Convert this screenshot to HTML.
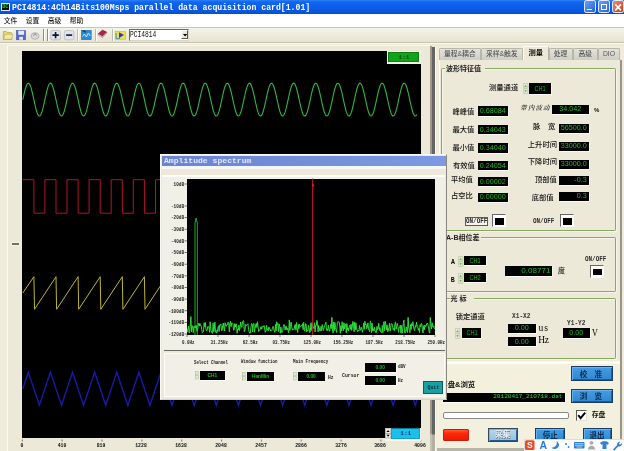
<!DOCTYPE html>
<html><head><meta charset="utf-8"><title>PCI4814</title>
<style>
html,body{margin:0;padding:0;}
body{width:624px;height:451px;overflow:hidden;background:#ece9d8;position:relative;font-family:"Liberation Sans","Noto Sans CJK SC",sans-serif;font-size:7px;color:#000;}
.a{position:absolute;box-sizing:border-box;}
.t{position:absolute;white-space:nowrap;line-height:1;}
.cj{font-family:"Liberation Sans","Noto Sans CJK SC",sans-serif;font-size:7.3px;color:#111;font-weight:500;}
.mono{font-family:"Liberation Mono","Noto Sans CJK SC",monospace;}
.ser{font-family:"Liberation Serif","Noto Serif CJK SC",serif;}
.vb{position:absolute;box-sizing:border-box;background:#000;color:#1ebc26;font-family:"Liberation Sans",sans-serif;font-size:7.2px;line-height:1;text-align:right;white-space:nowrap;overflow:hidden;box-shadow:0.7px 0.9px 0 0 #fdfdf8;}
.vb span{position:absolute;right:2px;top:50%;transform:translateY(-50%);}
.vb.c span{right:auto;left:50%;transform:translate(-50%,-50%);}
.vb.n span{right:auto;left:50%;transform:translate(-50%,-50%) scaleX(0.78);}
.gb{position:absolute;box-sizing:border-box;border:1.1px solid #86aa62;border-top-width:1.5px;border-bottom-width:1.7px;border-radius:1.2px;box-shadow:inset 0.8px 0.8px 0 #faf9f0,0.8px 0.8px 0 #faf9f0;}
.btn{position:absolute;box-sizing:border-box;border:0.9px solid #1a3c62;background:linear-gradient(#449ee4,#2e86d0);box-shadow:inset 0.9px 0.9px 0 #68b4f2,inset -0.9px -0.9px 0 #1e5c98;color:#0c2c4c;text-align:center;font-size:7.5px;line-height:1;}
.tab{position:absolute;box-sizing:border-box;top:48px;height:11.5px;border:1px solid #b8b6a8;border-bottom:none;border-radius:1.5px 1.5px 0 0;background:linear-gradient(#e4e3da,#cfcec6);color:#444;font-size:7px;text-align:center;line-height:10px;}
</style></head><body><div id="root" style="position:absolute;left:0;top:0;width:624px;height:451px;overflow:hidden;will-change:transform;">

<div class="a" style="left:0;top:0;width:624px;height:14.4px;background:linear-gradient(#3080f6 0%,#1066ee 14%,#0c5ee8 50%,#0a56dc 85%,#0a4cc8 100%);"></div>
<div class="a" style="left:0.5px;top:3px;width:9.8px;height:7.8px;background:#0c100c;border:0.8px solid #e8e8e8;"></div>
<div class="t mono" style="left:2.2px;top:4.6px;font-size:5px;color:#30c040;font-weight:bold;">DC</div>
<div class="t mono" style="left:12.3px;top:3.7px;font-size:9px;font-weight:bold;color:#fff;transform-origin:0 50%;transform:scaleX(0.905);">PCI4814:4Ch14Bits100Msps parallel data acquisition card[1.01]</div>
<div class="a" style="left:584.3px;top:0.4px;width:12.2px;height:13.1px;border:0.9px solid #e4ecfc;border-radius:2.2px;background:linear-gradient(135deg,#6aa0f6,#2462dc);"></div>
<div class="a" style="left:598.1px;top:0.4px;width:12.2px;height:13.1px;border:0.9px solid #e4ecfc;border-radius:2.2px;background:linear-gradient(135deg,#6aa0f6,#2462dc);"></div>
<div class="a" style="left:612.0px;top:0.4px;width:12.2px;height:13.1px;border:0.9px solid #e4ecfc;border-radius:2.2px;background:linear-gradient(135deg,#f08c70,#c43c1c);"></div>
<div class="a" style="left:587.3px;top:8.6px;width:4.6px;height:1.7px;background:#fff;"></div>
<div class="a" style="left:601.3px;top:3.6px;width:6.2px;height:6.2px;border:1px solid #fff;border-top-width:1.9px;"></div>
<svg class="a" style="left:612.2px;top:0.6px" width="12" height="13"><path d="M3.2 3.4L9 9.4M9 3.4L3.2 9.4" stroke="#fff" stroke-width="1.6"/></svg>
<div class="a" style="left:0;top:14.4px;width:624px;height:12.8px;background:#fff;"></div>
<div class="a" style="left:0;top:26.9px;width:624px;height:0.8px;background:#c8c5b4;"></div>
<div class="t cj" style="left:3.8px;top:18px;font-size:6.8px;color:#1a1a1a;">文件</div>
<div class="t cj" style="left:25.8px;top:18px;font-size:6.8px;color:#1a1a1a;">设置</div>
<div class="t cj" style="left:47.8px;top:18px;font-size:6.8px;color:#1a1a1a;">高级</div>
<div class="t cj" style="left:69.8px;top:18px;font-size:6.8px;color:#1a1a1a;">帮助</div>
<div class="a" style="left:0;top:27.7px;width:624px;height:14.8px;background:linear-gradient(#f4f3ea,#ece9d8 60%,#e6e3d2);"></div>
<div class="a" style="left:0;top:42.3px;width:624px;height:0.8px;background:#c5c2b0;"></div>
<div class="a" style="left:0;top:43.1px;width:624px;height:1.2px;background:#fbfaf4;"></div>
<div class="a" style="left:43.3px;top:29px;width:0.8px;height:12px;background:#8e8c7e;"></div>
<div class="a" style="left:44.1px;top:29px;width:0.8px;height:12px;background:#fff;"></div>
<div class="a" style="left:47.1px;top:29px;width:0.8px;height:12px;background:#8e8c7e;"></div>
<div class="a" style="left:47.9px;top:29px;width:0.8px;height:12px;background:#fff;"></div>
<div class="a" style="left:77.3px;top:29px;width:0.8px;height:12px;background:#bdbbaa;"></div>
<div class="a" style="left:78.1px;top:29px;width:0.8px;height:12px;background:#fff;"></div>
<div class="a" style="left:95.0px;top:29px;width:0.8px;height:12px;background:#bdbbaa;"></div>
<div class="a" style="left:95.8px;top:29px;width:0.8px;height:12px;background:#fff;"></div>
<div class="a" style="left:112.3px;top:29px;width:0.8px;height:12px;background:#bdbbaa;"></div>
<div class="a" style="left:113.1px;top:29px;width:0.8px;height:12px;background:#fff;"></div>
<svg class="a" style="left:0;top:27px" width="200" height="16" viewBox="0 27 200 16">
<!-- open folder -->
<path d="M3.3 31.5h3l1 1h4.5v7H3.3z" fill="#e4d878" stroke="#a89c48" stroke-width="0.6"/><path d="M9 30.5h3.2v2.5" fill="none" stroke="#fff" stroke-width="0.9"/>
<path d="M3.6 39.3l1.5-5h7.7l-1.3 5z" fill="#f4ea9c" stroke="#a89c48" stroke-width="0.5"/>
<!-- save -->
<rect x="16.4" y="30.5" width="9.2" height="9.3" fill="#5468c8" stroke="#3c4ca4" stroke-width="0.5"/>
<rect x="18.3" y="30.8" width="5.8" height="4" fill="#e8ecff"/>
<rect x="19.2" y="36.8" width="3.8" height="3" fill="#e4e8fa"/>
<!-- gray icon -->
<ellipse cx="35" cy="36" rx="4" ry="3.3" fill="#d8d8dc" stroke="#9898a0" stroke-width="0.6"/>
<path d="M33.5 35.5l1.5-2 1.5 2" fill="none" stroke="#707078" stroke-width="0.8"/>
<!-- plus -->
<rect x="50.8" y="30.5" width="9.6" height="9.3" rx="1.6" fill="#e0e4ee" stroke="#a4acbc" stroke-width="0.6"/>
<path d="M52.4 35.1h6.4M55.6 32v6.2" stroke="#101420" stroke-width="1.6"/>
<!-- minus -->
<rect x="64.4" y="30.5" width="9.6" height="9.3" rx="1.6" fill="#e0e4ee" stroke="#a4acbc" stroke-width="0.6"/>
<path d="M66.2 35.1h6" stroke="#101420" stroke-width="1.6"/>
<!-- blue chart -->
<rect x="81.4" y="30.3" width="9.8" height="9.4" fill="#2c8ad2" stroke="#1c5c9c" stroke-width="0.5"/><path d="M81.6 30.5h4v2.5z" fill="#143c78"/>
<path d="M82.4 36.5l2-2.5 2 3 2-4 2 3" fill="none" stroke="#d0f0ff" stroke-width="0.9"/>
<!-- book -->
<g transform="translate(14.5,3.6) scale(0.85)"><path d="M98.5 35.5l5-4.5 5 2.5-5 5z" fill="#a82448" stroke="#701428" stroke-width="0.5"/>
<path d="M98.5 35.5l5 3 5-5v1.3l-5 5-5-3z" fill="#e8d8d8" stroke="#701428" stroke-width="0.4"/></g>
<!-- play -->
<rect x="115.3" y="31.4" width="10.4" height="7.8" fill="#f2e048" stroke="#c0a830" stroke-width="0.5"/>
<path d="M119 32.3v5.6l5-2.8z" fill="#2838c0"/>
<path d="M116.2 33v5.5h4" fill="none" stroke="#3080d0" stroke-width="0.8"/>
</svg>
<div class="a" style="left:129px;top:29px;width:60px;height:11.5px;background:#fff;border:1px solid #6a6a60;border-right-color:#d8d6c8;border-bottom-color:#d8d6c8;"></div>
<div class="t mono" style="left:130.3px;top:30.9px;font-size:8.8px;color:#111;transform-origin:0 50%;transform:scaleX(0.71);">PCI4814</div>
<div class="a" style="left:180.5px;top:30.2px;width:7.5px;height:9.3px;background:#ece9d8;border:0.6px solid #fff;border-right-color:#555;border-bottom-color:#555;"></div>
<svg class="a" style="left:180.5px;top:30px" width="8" height="10"><path d="M2 4h4.2l-2.1 2.4z" fill="#000"/></svg>
<div class="a" style="left:0;top:44.3px;width:7px;height:407px;background:#efecdc;"></div>
<div class="a" style="left:7px;top:45px;width:1px;height:406px;background:#fbfaf2;"></div>
<div class="a" style="left:8px;top:45px;width:422px;height:1px;background:#fbfaf2;"></div>
<div class="a" style="left:12.2px;top:243.2px;width:7.3px;height:1.6px;background:#76715a;box-shadow:0 0 1.2px 0.6px #fbfaf4;"></div>
<div class="a" style="left:22.0px;top:51.0px;width:398.5px;height:386.5px;background:#000;"></div>
<svg class="a" style="left:0;top:0" width="624" height="451">
<polyline points="22.8,99.6 23.3,97.3 23.8,95.0 24.3,92.8 24.8,90.8 25.3,88.9 25.8,87.3 26.3,85.8 26.8,84.7 27.3,83.9 27.8,83.4 28.3,83.2 28.8,83.3 29.3,83.8 29.8,84.6 30.3,85.7 30.8,87.1 31.3,88.7 31.8,90.6 32.3,92.6 32.8,94.8 33.3,97.0 33.8,99.3 34.3,101.7 34.8,104.0 35.3,106.1 35.8,108.2 36.3,110.1 36.8,111.8 37.3,113.2 37.8,114.4 38.3,115.2 38.8,115.8 39.3,116.0 39.8,115.9 40.3,115.4 40.8,114.7 41.3,113.6 41.8,112.3 42.3,110.7 42.8,108.9 43.3,106.8 43.8,104.7 44.3,102.4 44.8,100.1 45.3,97.8 45.8,95.5 46.3,93.3 46.8,91.2 47.3,89.3 47.8,87.6 48.3,86.1 48.8,84.9 49.3,84.0 49.8,83.5 50.3,83.2 50.8,83.3 51.3,83.7 51.8,84.4 52.3,85.4 52.8,86.8 53.3,88.3 53.8,90.1 54.3,92.1 54.8,94.3 55.3,96.5 55.8,98.8 56.3,101.2 56.8,103.5 57.3,105.7 57.8,107.8 58.3,109.7 58.8,111.4 59.3,112.9 59.8,114.1 60.3,115.1 60.8,115.7 61.3,116.0 61.8,115.9 62.3,115.6 62.8,114.9 63.3,113.9 63.8,112.6 64.3,111.1 64.8,109.3 65.3,107.3 65.8,105.2 66.3,102.9 66.8,100.6 67.3,98.3 67.8,96.0 68.3,93.8 68.8,91.7 69.3,89.7 69.8,88.0 70.3,86.4 70.8,85.2 71.3,84.2 71.8,83.6 72.3,83.2 72.8,83.2 73.3,83.6 73.8,84.2 74.3,85.2 74.8,86.4 75.3,88.0 75.8,89.7 76.3,91.7 76.8,93.8 77.3,96.0 77.8,98.3 78.3,100.6 78.8,103.0 79.3,105.2 79.8,107.3 80.3,109.3 80.8,111.1 81.3,112.6 81.8,113.9 82.3,114.9 82.8,115.6 83.3,115.9 83.8,116.0 84.3,115.7 84.8,115.1 85.3,114.1 85.8,112.9 86.3,111.4 86.8,109.7 87.3,107.7 87.8,105.7 88.3,103.4 88.8,101.1 89.3,98.8 89.8,96.5 90.3,94.2 90.8,92.1 91.3,90.1 91.8,88.3 92.3,86.7 92.8,85.4 93.3,84.4 93.8,83.7 94.3,83.3 94.8,83.2 95.3,83.5 95.8,84.1 96.3,85.0 96.8,86.1 97.3,87.6 97.8,89.3 98.3,91.2 98.8,93.3 99.3,95.5 99.8,97.8 100.3,100.1 100.8,102.5 101.3,104.7 101.8,106.9 102.3,108.9 102.8,110.7 103.3,112.3 103.8,113.6 104.3,114.7 104.8,115.5 105.3,115.9 105.8,116.0 106.3,115.8 106.8,115.2 107.3,114.4 107.8,113.2 108.3,111.8 108.8,110.1 109.3,108.2 109.8,106.1 110.3,103.9 110.8,101.6 111.3,99.3 111.8,97.0 112.3,94.7 112.8,92.6 113.3,90.5 113.8,88.7 114.3,87.1 114.8,85.7 115.3,84.6 115.8,83.8 116.3,83.3 116.8,83.2 117.3,83.4 117.8,83.9 118.3,84.7 118.8,85.9 119.3,87.3 119.8,88.9 120.3,90.8 120.8,92.8 121.3,95.0 121.8,97.3 122.3,99.6 122.8,101.9 123.3,104.2 123.8,106.4 124.3,108.4 124.8,110.3 125.3,112.0 125.8,113.4 126.3,114.5 126.8,115.3 127.3,115.8 127.8,116.0 128.3,115.8 128.8,115.4 129.3,114.6 129.8,113.5 130.3,112.1 130.8,110.5 131.3,108.6 131.8,106.6 132.3,104.4 132.8,102.2 133.3,99.8 133.8,97.5 134.3,95.2 134.8,93.0 135.3,91.0 135.8,89.1 136.3,87.4 136.8,86.0 137.3,84.8 137.8,84.0 138.3,83.4 138.8,83.2 139.3,83.3 139.8,83.8 140.3,84.5 140.8,85.6 141.3,86.9 141.8,88.5 142.3,90.4 142.8,92.4 143.3,94.5 143.8,96.8 144.3,99.1 144.8,101.4 145.3,103.7 145.8,105.9 146.3,108.0 146.8,109.9 147.3,111.6 147.8,113.1 148.3,114.3 148.8,115.2 149.3,115.7 149.8,116.0 150.3,115.9 150.8,115.5 151.3,114.8 151.8,113.7 152.3,112.4 152.8,110.8 153.3,109.0 153.8,107.1 154.3,104.9 154.8,102.7 155.3,100.3 155.8,98.0 156.3,95.7 156.8,93.5 157.3,91.4 157.8,89.5 158.3,87.8 158.8,86.3 159.3,85.0 159.8,84.1 160.3,83.5 160.8,83.2 161.3,83.3 161.8,83.6 162.3,84.3 162.8,85.3 163.3,86.6 163.8,88.2 164.3,89.9 164.8,91.9 165.3,94.0 165.8,96.3 166.3,98.6 166.8,100.9 167.3,103.2 167.8,105.5 168.3,107.6 168.8,109.5 169.3,111.3 169.8,112.8 170.3,114.0 170.8,115.0 171.3,115.6 171.8,116.0 172.3,116.0 172.8,115.6 173.3,115.0 173.8,114.0 174.3,112.7 174.8,111.2 175.3,109.5 175.8,107.5 176.3,105.4 176.8,103.2 177.3,100.9 177.8,98.5 178.3,96.2 178.8,94.0 179.3,91.9 179.8,89.9 180.3,88.1 180.8,86.6 181.3,85.3 181.8,84.3 182.3,83.6 182.8,83.3 183.3,83.2 183.8,83.5 184.3,84.1 184.8,85.1 185.3,86.3 185.8,87.8 186.3,89.5 186.8,91.5 187.3,93.6 187.8,95.8 188.3,98.1 188.8,100.4 189.3,102.7 189.8,105.0 190.3,107.1 190.8,109.1 191.3,110.9 191.8,112.5 192.3,113.8 192.8,114.8 193.3,115.5 193.8,115.9 194.3,116.0 194.8,115.7 195.3,115.1 195.8,114.2 196.3,113.0 196.8,111.6 197.3,109.9 197.8,108.0 198.3,105.9 198.8,103.7 199.3,101.4 199.8,99.0 200.3,96.7 200.8,94.5 201.3,92.3 201.8,90.3 202.3,88.5 202.8,86.9 203.3,85.6 203.8,84.5 204.3,83.7 204.8,83.3 205.3,83.2 205.8,83.4 206.3,84.0 206.8,84.9 207.3,86.0 207.8,87.5 208.3,89.1 208.8,91.0 209.3,93.1 209.8,95.3 210.3,97.6 210.8,99.9 211.3,102.2 211.8,104.5 212.3,106.7 212.8,108.7 213.3,110.5 213.8,112.1 214.3,113.5 214.8,114.6 215.3,115.4 215.8,115.9 216.3,116.0 216.8,115.8 217.3,115.3 217.8,114.5 218.3,113.3 218.8,111.9 219.3,110.3 219.8,108.4 220.3,106.3 220.8,104.2 221.3,101.9 221.8,99.6 222.3,97.2 222.8,95.0 223.3,92.8 223.8,90.7 224.3,88.9 224.8,87.2 225.3,85.8 225.8,84.7 226.3,83.9 226.8,83.4 227.3,83.2 227.8,83.4 228.3,83.8 228.8,84.6 229.3,85.7 229.8,87.1 230.3,88.7 230.8,90.6 231.3,92.6 231.8,94.8 232.3,97.1 232.8,99.4 233.3,101.7 233.8,104.0 234.3,106.2 234.8,108.2 235.3,110.1 235.8,111.8 236.3,113.2 236.8,114.4 237.3,115.2 237.8,115.8 238.3,116.0 238.8,115.9 239.3,115.4 239.8,114.7 240.3,113.6 240.8,112.3 241.3,110.6 241.8,108.8 242.3,106.8 242.8,104.6 243.3,102.4 243.8,100.1 244.3,97.7 244.8,95.5 245.3,93.2 245.8,91.2 246.3,89.3 246.8,87.6 247.3,86.1 247.8,84.9 248.3,84.0 248.8,83.5 249.3,83.2 249.8,83.3 250.3,83.7 250.8,84.4 251.3,85.5 251.8,86.8 252.3,88.4 252.8,90.2 253.3,92.2 253.8,94.3 254.3,96.6 254.8,98.9 255.3,101.2 255.8,103.5 256.3,105.7 256.8,107.8 257.3,109.7 257.8,111.5 258.3,112.9 258.8,114.2 259.3,115.1 259.8,115.7 260.3,116.0 260.8,115.9 261.3,115.6 261.8,114.9 262.3,113.9 262.8,112.6 263.3,111.0 263.8,109.2 264.3,107.3 264.8,105.1 265.3,102.9 265.8,100.6 266.3,98.2 266.8,95.9 267.3,93.7 267.8,91.6 268.3,89.7 268.8,87.9 269.3,86.4 269.8,85.2 270.3,84.2 270.8,83.6 271.3,83.2 271.8,83.2 272.3,83.6 272.8,84.2 273.3,85.2 273.8,86.5 274.3,88.0 274.8,89.8 275.3,91.7 275.8,93.8 276.3,96.1 276.8,98.4 277.3,100.7 277.8,103.0 278.3,105.2 278.8,107.4 279.3,109.3 279.8,111.1 280.3,112.6 280.8,113.9 281.3,114.9 281.8,115.6 282.3,115.9 282.8,116.0 283.3,115.7 283.8,115.0 284.3,114.1 284.8,112.9 285.3,111.4 285.8,109.6 286.3,107.7 286.8,105.6 287.3,103.4 287.8,101.1 288.3,98.8 288.8,96.5 289.3,94.2 289.8,92.1 290.3,90.1 290.8,88.3 291.3,86.7 291.8,85.4 292.3,84.4 292.8,83.7 293.3,83.3 293.8,83.2 294.3,83.5 294.8,84.1 295.3,85.0 295.8,86.2 296.3,87.6 296.8,89.4 297.3,91.3 297.8,93.4 298.3,95.6 298.8,97.9 299.3,100.2 299.8,102.5 300.3,104.8 300.8,106.9 301.3,108.9 301.8,110.7 302.3,112.3 302.8,113.7 303.3,114.7 303.8,115.5 304.3,115.9 304.8,116.0 305.3,115.8 305.8,115.2 306.3,114.3 306.8,113.2 307.3,111.7 307.8,110.0 308.3,108.2 308.8,106.1 309.3,103.9 309.8,101.6 310.3,99.3 310.8,97.0 311.3,94.7 311.8,92.5 312.3,90.5 312.8,88.7 313.3,87.0 313.8,85.7 314.3,84.6 314.8,83.8 315.3,83.3 315.8,83.2 316.3,83.4 316.8,83.9 317.3,84.8 317.8,85.9 318.3,87.3 318.8,89.0 319.3,90.8 319.8,92.9 320.3,95.1 320.8,97.3 321.3,99.7 321.8,102.0 322.3,104.3 322.8,106.4 323.3,108.5 323.8,110.3 324.3,112.0 324.8,113.4 325.3,114.5 325.8,115.3 326.3,115.8 326.8,116.0 327.3,115.8 327.8,115.4 328.3,114.6 328.8,113.5 329.3,112.1 329.8,110.4 330.3,108.6 330.8,106.6 331.3,104.4 331.8,102.1 332.3,99.8 332.8,97.5 333.3,95.2 333.8,93.0 334.3,90.9 334.8,89.0 335.3,87.4 335.8,86.0 336.3,84.8 336.8,83.9 337.3,83.4 337.8,83.2 338.3,83.3 338.8,83.8 339.3,84.5 339.8,85.6 340.3,87.0 340.8,88.6 341.3,90.4 341.8,92.4 342.3,94.6 342.8,96.8 343.3,99.2 343.8,101.5 344.3,103.8 344.8,106.0 345.3,108.1 345.8,110.0 346.3,111.7 346.8,113.1 347.3,114.3 347.8,115.2 348.3,115.7 348.8,116.0 349.3,115.9 349.8,115.5 350.3,114.8 350.8,113.7 351.3,112.4 351.8,110.8 352.3,109.0 352.8,107.0 353.3,104.9 353.8,102.6 354.3,100.3 354.8,98.0 355.3,95.7 355.8,93.5 356.3,91.4 356.8,89.4 357.3,87.7 357.8,86.2 358.3,85.0 358.8,84.1 359.3,83.5 359.8,83.2 360.3,83.3 360.8,83.6 361.3,84.3 361.8,85.4 362.3,86.6 362.8,88.2 363.3,90.0 363.8,92.0 364.3,94.1 364.8,96.3 365.3,98.6 365.8,101.0 366.3,103.3 366.8,105.5 367.3,107.6 367.8,109.6 368.3,111.3 368.8,112.8 369.3,114.1 369.8,115.0 370.3,115.6 370.8,116.0 371.3,116.0 371.8,115.6 372.3,114.9 372.8,114.0 373.3,112.7 373.8,111.2 374.3,109.4 374.8,107.5 375.3,105.3 375.8,103.1 376.3,100.8 376.8,98.5 377.3,96.2 377.8,93.9 378.3,91.8 378.8,89.9 379.3,88.1 379.8,86.5 380.3,85.3 380.8,84.3 381.3,83.6 381.8,83.3 382.3,83.2 382.8,83.5 383.3,84.2 383.8,85.1 384.3,86.3 384.8,87.8 385.3,89.6 385.8,91.5 386.3,93.6 386.8,95.8 387.3,98.1 387.8,100.5 388.3,102.8 388.8,105.0 389.3,107.2 389.8,109.1 390.3,110.9 390.8,112.5 391.3,113.8 391.8,114.8 392.3,115.5 392.8,115.9 393.3,116.0 393.8,115.7 394.3,115.1 394.8,114.2 395.3,113.0 395.8,111.5 396.3,109.8 396.8,107.9 397.3,105.8 397.8,103.6 398.3,101.3 398.8,99.0 399.3,96.7 399.8,94.4 400.3,92.3 400.8,90.3 401.3,88.5 401.8,86.9 402.3,85.5 402.8,84.5 403.3,83.7 403.8,83.3 404.3,83.2 404.8,83.4 405.3,84.0 405.8,84.9 406.3,86.0 406.8,87.5 407.3,89.2 407.8,91.1 408.3,93.1 408.8,95.3 409.3,97.6 409.8,99.9 410.3,102.3 410.8,104.5 411.3,106.7 411.8,108.7 412.3,110.6 412.8,112.2 413.3,113.5 413.8,114.6 414.3,115.4 414.8,115.9 415.3,116.0 415.8,115.8 416.3,115.3 416.8,114.4" fill="none" stroke="#30b848" stroke-width="1.1"/>
<polyline points="22.8,179.7 33.9,179.7 33.9,213.2 44.9,213.2 44.9,179.7 56.0,179.7 56.0,213.2 67.0,213.2 67.0,179.7 78.1,179.7 78.1,213.2 89.1,213.2 89.1,179.7 100.2,179.7 100.2,213.2 111.2,213.2 111.2,179.7 122.3,179.7 122.3,213.2 133.3,213.2 133.3,179.7 144.4,179.7 144.4,213.2 155.5,213.2 155.5,179.7 166.5,179.7 166.5,213.2 177.6,213.2 177.6,179.7 188.6,179.7 188.6,213.2 199.7,213.2 199.7,179.7 210.7,179.7 210.7,213.2 221.8,213.2 221.8,179.7 232.8,179.7 232.8,213.2 243.9,213.2 243.9,179.7 255.0,179.7 255.0,213.2 266.0,213.2 266.0,179.7 277.1,179.7 277.1,213.2 288.1,213.2 288.1,179.7 299.2,179.7 299.2,213.2 310.2,213.2 310.2,179.7 321.3,179.7 321.3,213.2 332.3,213.2 332.3,179.7 343.4,179.7 343.4,213.2 354.4,213.2 354.4,179.7 365.5,179.7 365.5,213.2 376.6,213.2 376.6,179.7 387.6,179.7 387.6,213.2 398.7,213.2 398.7,179.7 409.7,179.7 409.7,213.2 417.0,213.2" fill="none" stroke="#b41426" stroke-width="1.0"/>
<polyline points="22.8,293.0 33.9,276.7 34.5,309.3 56.0,276.7 56.6,309.3 78.1,276.7 78.7,309.3 100.2,276.7 100.8,309.3 122.3,276.7 122.9,309.3 144.4,276.7 145.0,309.3 166.5,276.7 167.1,309.3 188.6,276.7 189.2,309.3 210.7,276.7 211.3,309.3 232.8,276.7 233.4,309.3 255.0,276.7 255.6,309.3 277.1,276.7 277.7,309.3 299.2,276.7 299.8,309.3 321.3,276.7 321.9,309.3 343.4,276.7 344.0,309.3 365.5,276.7 366.1,309.3 387.6,276.7 388.2,309.3 409.7,276.7 410.3,309.3 417.0,298.6" fill="none" stroke="#beb62c" stroke-width="1.0" stroke-linejoin="bevel"/>
<polyline points="22.8,388.8 28.3,372.3 39.4,405.2 50.4,372.3 61.5,405.2 72.5,372.3 83.6,405.2 94.7,372.3 105.7,405.2 116.8,372.3 127.8,405.2 138.9,372.3 149.9,405.2 161.0,372.3 172.0,405.2 183.1,372.3 194.2,405.2 205.2,372.3 216.3,405.2 227.3,372.3 238.4,405.2 249.4,372.3 260.5,405.2 271.5,372.3 282.6,405.2 293.6,372.3 304.7,405.2 315.8,372.3 326.8,405.2 337.9,372.3 348.9,405.2 360.0,372.3 371.0,405.2 382.1,372.3 393.1,405.2 404.2,372.3 415.3,405.2 417.0,400.0" fill="none" stroke="#1a1aa6" stroke-width="1.4"/>
<path d="M22.3 439.5v2" stroke="#444" stroke-width="0.7"/>
<path d="M62.1 439.5v2" stroke="#444" stroke-width="0.7"/>
<path d="M102.0 439.5v2" stroke="#444" stroke-width="0.7"/>
<path d="M141.9 439.5v2" stroke="#444" stroke-width="0.7"/>
<path d="M181.7 439.5v2" stroke="#444" stroke-width="0.7"/>
<path d="M221.6 439.5v2" stroke="#444" stroke-width="0.7"/>
<path d="M261.4 439.5v2" stroke="#444" stroke-width="0.7"/>
<path d="M301.2 439.5v2" stroke="#444" stroke-width="0.7"/>
<path d="M341.1 439.5v2" stroke="#444" stroke-width="0.7"/>
<path d="M380.9 439.5v2" stroke="#444" stroke-width="0.7"/>
<path d="M420.8 439.5v2" stroke="#444" stroke-width="0.7"/>
</svg>
<div class="t mono" style="left:6.7px;top:442.7px;width:30px;text-align:center;font-size:6px;font-weight:bold;color:#0a0a0a;transform:scaleX(0.8);">0</div>
<div class="t mono" style="left:46.6px;top:442.7px;width:30px;text-align:center;font-size:6px;font-weight:bold;color:#0a0a0a;transform:scaleX(0.8);">410</div>
<div class="t mono" style="left:86.4px;top:442.7px;width:30px;text-align:center;font-size:6px;font-weight:bold;color:#0a0a0a;transform:scaleX(0.8);">819</div>
<div class="t mono" style="left:126.3px;top:442.7px;width:30px;text-align:center;font-size:6px;font-weight:bold;color:#0a0a0a;transform:scaleX(0.8);">1228</div>
<div class="t mono" style="left:166.1px;top:442.7px;width:30px;text-align:center;font-size:6px;font-weight:bold;color:#0a0a0a;transform:scaleX(0.8);">1638</div>
<div class="t mono" style="left:205.9px;top:442.7px;width:30px;text-align:center;font-size:6px;font-weight:bold;color:#0a0a0a;transform:scaleX(0.8);">2048</div>
<div class="t mono" style="left:245.8px;top:442.7px;width:30px;text-align:center;font-size:6px;font-weight:bold;color:#0a0a0a;transform:scaleX(0.8);">2457</div>
<div class="t mono" style="left:285.6px;top:442.7px;width:30px;text-align:center;font-size:6px;font-weight:bold;color:#0a0a0a;transform:scaleX(0.8);">2866</div>
<div class="t mono" style="left:325.5px;top:442.7px;width:30px;text-align:center;font-size:6px;font-weight:bold;color:#0a0a0a;transform:scaleX(0.8);">3276</div>
<div class="t mono" style="left:365.3px;top:442.7px;width:30px;text-align:center;font-size:6px;font-weight:bold;color:#0a0a0a;transform:scaleX(0.8);">3686</div>
<div class="t mono" style="left:405.2px;top:442.7px;width:30px;text-align:center;font-size:6px;font-weight:bold;color:#0a0a0a;transform:scaleX(0.8);">4096</div>
<div class="a" style="left:386.6px;top:51px;width:34.2px;height:13px;background:#f4f3ea;"></div>
<div class="a" style="left:388px;top:52.2px;width:31.2px;height:9.9px;background:#10a418;border:0.6px solid #0c8012;"></div>
<div class="t mono" style="left:388.5px;top:54.9px;width:31px;text-align:center;font-size:6.2px;color:#064808;font-weight:bold;">1:1</div>
<div class="a" style="left:385px;top:427.8px;width:35.8px;height:13px;background:#f6f5ee;"></div>
<div class="a" style="left:391.4px;top:427.8px;width:29px;height:11.3px;background:#18c0ea;border:0.6px solid #14a0c8;border-top:1.2px solid #0c7c9c;"></div>
<div class="t mono" style="left:391.5px;top:431.2px;width:28.5px;text-align:center;font-size:6.2px;color:#0c3c78;font-weight:bold;">1:1</div>
<svg class="a" style="left:385px;top:428px" width="7" height="11"><rect x="0.3" y="0.8" width="5.6" height="4.4" fill="#f4f2e8" stroke="#888" stroke-width="0.5"/><rect x="0.3" y="5.6" width="5.6" height="4.4" fill="#f4f2e8" stroke="#888" stroke-width="0.5"/><path d="M1.4 4l1.7-2 1.7 2zM1.4 6.8l1.7 2 1.7-2z" fill="#000"/></svg>
<div class="a" style="left:430px;top:46px;width:2.2px;height:405px;background:linear-gradient(#a0968a 0,#a0968a 387px,#c4c2b4 389px);"></div>
<div class="a" style="left:432.2px;top:46.5px;width:2.8px;height:405px;background:linear-gradient(#646462 0,#646462 386.5px,#b2b0a4 388.5px);"></div>
<div class="a" style="left:435px;top:46.5px;width:1.6px;height:405px;background:#f8f7f0;"></div>
<div class="a" style="left:436px;top:45px;width:188px;height:406px;background:#efecdc;"></div>
<div class="a" style="left:437px;top:363.5px;width:183px;height:85px;background:#f3f0de;"></div>
<div class="a" style="left:437px;top:361.6px;width:183px;height:2px;background:#fdfdf2;"></div>
<div class="a" style="left:438.5px;top:59px;width:182px;height:302.8px;background:#ece9d8;border:1px solid #fbfaf4;border-right-color:#b4b2a4;"></div>
<div class="tab cj" style="left:439.0px;width:41.5px;font-size:6.8px;color:#555;">量程&耦合</div>
<div class="tab cj" style="left:481.0px;width:41.5px;font-size:6.8px;color:#555;">采样&触发</div>
<div class="tab cj" style="left:548.5px;width:24.0px;font-size:6.8px;color:#555;">处理</div>
<div class="tab cj" style="left:573.0px;width:24.5px;font-size:6.8px;color:#555;">高级</div>
<div class="tab cj" style="left:598.0px;width:22.0px;font-size:6.8px;color:#555;">DIO</div>
<div class="a cj" style="left:523px;top:45.5px;width:25.5px;height:14.5px;background:#ece9d8;border:1px solid #b4b2a4;border-bottom:none;border-left-color:#fbfaf4;border-top-color:#fbfaf4;border-radius:1.5px 1.5px 0 0;text-align:center;font-size:7.3px;line-height:12px;font-weight:bold;color:#111;">测量</div>
<div class="a" style="left:620.4px;top:60px;width:1.2px;height:388.5px;background:#97958a;"></div>
<div class="gb" style="left:440.5px;top:67.8px;width:175.0px;height:163.5px;"></div>
<div class="t cj" style="left:445.0px;top:64.6px;width:38.0px;background:#ece9d8;font-size:7px;font-weight:bold;color:#222;padding:0 1px;">波形特征值</div>
<div class="gb" style="left:440.5px;top:236.8px;width:175.0px;height:55.7px;"></div>
<div class="t cj" style="left:445.0px;top:233.6px;width:34.0px;background:#ece9d8;font-size:7px;font-weight:bold;color:#222;padding:0 1px;">A-B相位差</div>
<div class="gb" style="left:440.5px;top:298.3px;width:175.0px;height:61.2px;"></div>
<div class="t cj" style="left:449.5px;top:295.1px;width:22.0px;background:#ece9d8;font-size:7px;font-weight:bold;color:#222;padding:0 1px;">光 标</div>
<div class="t cj" style="left:489.0px;top:83.8px;font-size:7.3px;">测量通道</div>
<svg class="a" style="left:523.3px;top:83.1px" width="6" height="11"><rect x="0.3" y="0.3" width="4.6" height="4.8" rx="0.8" fill="#e4ecd8" stroke="#98b080" stroke-width="0.5"/><rect x="0.3" y="5.6" width="4.6" height="4.8" rx="0.8" fill="#e4ecd8" stroke="#98b080" stroke-width="0.5"/><path d="M1.3 3.7l1.3-1.8 1.3 1.8zM1.3 7.2l1.3 1.8 1.3-1.8z" fill="#50a040"/></svg>
<div class="vb n" style="left:529.0px;top:83.0px;width:22.0px;height:11.0px;"><span>CH1</span></div>
<div class="t cj" style="left:452.5px;top:107.8px;font-size:7.3px;">峰峰值</div>
<div class="vb " style="left:477.7px;top:106.3px;width:30.0px;height:9.5px;"><span>0.68084</span></div>
<div class="t cj" style="left:452.5px;top:126.2px;font-size:7.3px;">最大值</div>
<div class="vb " style="left:477.7px;top:125.0px;width:30.0px;height:9.3px;"><span>0.34043</span></div>
<div class="t cj" style="left:452.5px;top:144.3px;font-size:7.3px;">最小值</div>
<div class="vb " style="left:477.7px;top:143.3px;width:30.0px;height:9.7px;"><span>0.34040</span></div>
<div class="t cj" style="left:453.0px;top:161.8px;font-size:7.3px;">有效值</div>
<div class="vb " style="left:477.7px;top:161.3px;width:30.0px;height:9.0px;"><span>0.24054</span></div>
<div class="t cj" style="left:451.0px;top:175.8px;font-size:7.3px;">平均值</div>
<div class="vb " style="left:477.7px;top:177.0px;width:30.0px;height:9.3px;"><span>0.00002</span></div>
<div class="t cj" style="left:451.0px;top:191.8px;font-size:7.3px;">占空比</div>
<div class="vb " style="left:477.7px;top:192.5px;width:30.0px;height:9.2px;"><span>0.00000</span></div>
<div class="t ser" style="left:520.3px;top:105.1px;font-size:6.4px;font-style:italic;font-weight:600;letter-spacing:1.2px;color:#222;">带内波动</div>
<div class="vb c" style="left:551.7px;top:105.2px;width:37.0px;height:8.6px;"><span>34.042</span></div>
<div class="t cj" style="left:594.0px;top:106.5px;font-size:6.0px;font-weight:bold;">%</div>
<div class="t cj" style="left:533.0px;top:122.8px;font-size:7.3px;">脉<span style="display:inline-block;width:7.6px"></span>宽</div>
<div class="vb " style="left:559.0px;top:123.7px;width:29.7px;height:9.3px;"><span>56500.0</span></div>
<div class="t cj" style="left:527.8px;top:141.3px;font-size:7.3px;">上升时间</div>
<div class="vb " style="left:559.0px;top:141.7px;width:29.7px;height:9.3px;"><span>33000.0</span></div>
<div class="t cj" style="left:527.8px;top:158.3px;font-size:7.3px;">下降时间</div>
<div class="vb " style="left:559.0px;top:159.7px;width:29.7px;height:9.3px;"><span>33000.0</span></div>
<div class="t cj" style="left:535.0px;top:175.8px;font-size:7.3px;">顶部值</div>
<div class="vb " style="left:559.0px;top:175.8px;width:29.7px;height:9.2px;"><span>-0.3</span></div>
<div class="t cj" style="left:531.7px;top:193.8px;font-size:7.3px;">底部值</div>
<div class="vb " style="left:559.0px;top:192.0px;width:29.7px;height:8.8px;"><span>0.3</span></div>
<div class="a" style="left:465px;top:217.3px;width:23.4px;height:8.6px;border:0.7px solid #5a5a56;background:#f6f4ea;"></div>
<div class="t mono" style="left:466.2px;top:218.3px;font-size:7.4px;font-weight:bold;color:#2a2a2a;transform-origin:0 50%;transform:scaleX(0.8);">ON/OFF</div>
<div class="a" style="left:492.0px;top:214.0px;width:14.0px;height:13.2px;background:#fff;border:0.8px solid #666;border-right-color:#fff;border-bottom-color:#fff;"></div>
<div class="a" style="left:495.0px;top:217.6px;width:9.0px;height:7.1px;background:#000;"></div>
<div class="t mono" style="left:533.3px;top:218.0px;font-size:7.4px;font-weight:bold;color:#2a2a2a;transform-origin:0 50%;transform:scaleX(0.8);">ON/OFF</div>
<div class="a" style="left:559.8px;top:214.0px;width:14.2px;height:13.2px;background:#fff;border:0.8px solid #666;border-right-color:#fff;border-bottom-color:#fff;"></div>
<div class="a" style="left:562.8px;top:217.6px;width:9.2px;height:7.1px;background:#000;"></div>
<div class="t mono" style="left:451.0px;top:260.2px;font-size:6.5px;font-weight:bold;">A</div>
<div class="t mono" style="left:450.8px;top:277.8px;font-size:6.5px;font-weight:bold;">B</div>
<svg class="a" style="left:457.7px;top:255.6px" width="6" height="11"><rect x="0.3" y="0.3" width="4.6" height="4.8" rx="0.8" fill="#e4ecd8" stroke="#98b080" stroke-width="0.5"/><rect x="0.3" y="5.6" width="4.6" height="4.8" rx="0.8" fill="#e4ecd8" stroke="#98b080" stroke-width="0.5"/><path d="M1.3 3.7l1.3-1.8 1.3 1.8zM1.3 7.2l1.3 1.8 1.3-1.8z" fill="#50a040"/></svg>
<svg class="a" style="left:457.7px;top:272.9px" width="6" height="11"><rect x="0.3" y="0.3" width="4.6" height="4.8" rx="0.8" fill="#e4ecd8" stroke="#98b080" stroke-width="0.5"/><rect x="0.3" y="5.6" width="4.6" height="4.8" rx="0.8" fill="#e4ecd8" stroke="#98b080" stroke-width="0.5"/><path d="M1.3 3.7l1.3-1.8 1.3 1.8zM1.3 7.2l1.3 1.8 1.3-1.8z" fill="#50a040"/></svg>
<div class="vb n" style="left:464.3px;top:255.8px;width:21.4px;height:9.5px;"><span>CH1</span></div>
<div class="vb n" style="left:464.3px;top:273.3px;width:21.4px;height:9.2px;"><span>CH2</span></div>
<div class="vb " style="left:504.7px;top:265.5px;width:47.8px;height:10.3px;font-size:8.1px;"><span>0.08771</span></div>
<div class="t cj" style="left:558.0px;top:267.0px;font-size:7.0px;">度</div>
<div class="t mono" style="left:585.3px;top:255.5px;font-size:7.4px;font-weight:bold;color:#2a2a2a;transform-origin:0 50%;transform:scaleX(0.8);">ON/OFF</div>
<div class="a" style="left:590.0px;top:265.0px;width:14.0px;height:12.5px;background:#fff;border:0.8px solid #666;border-right-color:#fff;border-bottom-color:#fff;"></div>
<div class="a" style="left:593.0px;top:268.6px;width:9.0px;height:6.4px;background:#000;"></div>
<div class="t cj" style="left:455.7px;top:313.4px;font-size:7.3px;">锁定通道</div>
<svg class="a" style="left:455.3px;top:327.6px" width="6" height="11"><rect x="0.3" y="0.3" width="4.6" height="4.8" rx="0.8" fill="#e4ecd8" stroke="#98b080" stroke-width="0.5"/><rect x="0.3" y="5.6" width="4.6" height="4.8" rx="0.8" fill="#e4ecd8" stroke="#98b080" stroke-width="0.5"/><path d="M1.3 3.7l1.3-1.8 1.3 1.8zM1.3 7.2l1.3 1.8 1.3-1.8z" fill="#50a040"/></svg>
<div class="vb n" style="left:461.8px;top:328.0px;width:19.5px;height:9.5px;"><span>CH1</span></div>
<div class="t mono" style="left:511.6px;top:313.4px;font-size:7.0px;font-weight:bold;color:#333;transform-origin:0 50%;transform:scaleX(0.88);">X1-X2</div>
<div class="vb c" style="left:508.0px;top:323.7px;width:27.7px;height:9.3px;"><span>0.00</span></div>
<div class="vb c" style="left:508.0px;top:337.0px;width:27.7px;height:9.3px;"><span>0.00</span></div>
<div class="t ser" style="left:538.4px;top:323.8px;font-size:9.5px;letter-spacing:1px;">us</div>
<div class="t ser" style="left:538.3px;top:336.2px;font-size:9.5px;letter-spacing:-0.3px;">Hz</div>
<div class="t mono" style="left:566.5px;top:320.1px;font-size:7.0px;font-weight:bold;color:#333;transform-origin:0 50%;transform:scaleX(0.88);">Y1-Y2</div>
<div class="vb c" style="left:562.5px;top:328.0px;width:27.5px;height:9.5px;"><span>0.00</span></div>
<div class="t ser" style="left:592.0px;top:328.4px;font-size:10.0px;transform-origin:0 50%;transform:scaleX(0.8);">V</div>
<div class="btn cj" style="left:571.2px;top:366.4px;width:41.4px;height:14.4px;line-height:15px;font-weight:bold;letter-spacing:7.5px;text-indent:5.5px;">校准</div>
<div class="btn cj" style="left:571.2px;top:388.6px;width:41.4px;height:14.4px;line-height:14.4px;font-weight:bold;letter-spacing:7.5px;text-indent:5.5px;">浏览</div>
<div class="t cj" style="left:440.3px;top:381.3px;font-size:7.4px;font-weight:bold;">存盘&amp;浏览</div>
<div class="a" style="left:442.7px;top:392.5px;width:122px;height:9px;background:#000;box-shadow:0.5px 0.5px 0 0.5px #fff;"></div>
<div class="t mono" style="left:470px;top:394.2px;width:92.5px;text-align:right;font-size:6.08px;color:#30d838;">20120417_210718.dat</div>
<div class="a" style="left:442.7px;top:411.5px;width:126px;height:7.5px;background:#fff;border:0.8px solid #888;border-radius:2px;"></div>
<div class="a" style="left:575.8px;top:409.8px;width:10.9px;height:11px;background:#fff;border:0.9px solid #5c5c58;border-right-color:#e4e2d6;border-bottom-color:#e4e2d6;"></div>
<svg class="a" style="left:575.8px;top:409.8px" width="11" height="11"><path d="M2.2 5.2l2.4 3 4.6-5.6" fill="none" stroke="#000" stroke-width="1.9"/></svg>
<div class="t cj" style="left:591.7px;top:411.6px;font-size:6.9px;font-weight:bold;">存盘</div>
<div class="a" style="left:443px;top:429px;width:26px;height:11.5px;background:linear-gradient(#ff5838 0%,#ff2808 35%,#f01800 100%);border:0.6px solid #c02010;border-radius:1px;"></div>
<div class="btn cj" style="left:487.7px;top:428.3px;width:30px;height:14.2px;line-height:12.5px;background:linear-gradient(#b8d8ec,#98c0d8);border-color:#384858;color:#e8f0f4;font-weight:bold;text-shadow:0.5px 0.5px 0 #607080;">采集</div>
<div class="btn cj" style="left:535.3px;top:428px;width:30px;height:15px;line-height:13px;font-weight:bold;">停止</div>
<div class="btn cj" style="left:582.5px;top:428px;width:29px;height:15px;line-height:13px;font-weight:bold;">退出</div>
<div class="a" style="left:437px;top:447.8px;width:187px;height:3.2px;background:#b8b6a8;"></div>
<div class="a" style="left:523.5px;top:438.7px;width:101px;height:12.5px;background:#fcfcfc;border-top:0.5px solid #ddd;border-left:0.5px solid #ddd;"></div>
<svg class="a" style="left:523px;top:438px" width="101" height="13" viewBox="523 438 101 13">
<rect x="525" y="440.2" width="9.5" height="9.8" rx="1.5" fill="#f04820"/>
<text x="529.8" y="448.3" font-family="Liberation Sans, sans-serif" font-size="8.5" font-weight="bold" fill="#fff" text-anchor="middle">S</text>
<text x="543.3" y="449.4" font-family="Liberation Sans, sans-serif" font-size="10.5" font-weight="bold" fill="#2c7cdc" text-anchor="middle">A</text>
<path d="M556.5 441a4.2 4.2 0 1 1-5 6.5a4.8 4.8 0 0 0 5-6.5z" fill="#3080d8"/>
<circle cx="566" cy="444" r="1" fill="#3080d8"/><circle cx="568.6" cy="447" r="0.9" fill="#3080d8"/>
<rect x="574" y="442" width="10.5" height="6.5" rx="0.8" fill="#3080d8"/>
<path d="M575 443.7h8.5M575 445.3h8.5M576.5 447h5.5" stroke="#fff" stroke-width="0.6"/>
<circle cx="591.5" cy="442.8" r="1.9" fill="#a8a8b0"/><path d="M588 449.5c0-5 7-5 7 0z" fill="#a8a8b0"/>
<path d="M600 443l2.5-1.8h4l2.5 1.8-1.3 1.8-1.2-.8v5h-4v-5l-1.2.8z" fill="#3080d8"/>
<path d="M613 449.5l4.2-4.4a2.6 2.6 0 0 1 3.3-3.3l-1.7 1.7 1.2 1.2 1.7-1.7a2.6 2.6 0 0 1-3.3 3.3l-4.2 4.4z" fill="#3080d8"/>
</svg>
<div class="a" style="left:160px;top:154px;width:287px;height:245.6px;background:#ece9d8;border:1px solid #fbfaf2;border-right-color:#8a887c;border-bottom-color:#d4d2c2;"></div>
<div class="a" style="left:161.5px;top:155.8px;width:284px;height:10.2px;background:linear-gradient(90deg,#6a84d0,#7c9ae4);"></div>
<div class="t mono" style="left:164px;top:156.6px;font-size:8.1px;font-weight:bold;color:#dfe7ff;">Amplitude spectrum</div>
<div class="a" style="left:161.5px;top:166.2px;width:284px;height:3.2px;background:#f6f6f8;"></div>
<div class="a" style="left:161.8px;top:175.4px;width:283.6px;height:174.6px;background:#f1f0e7;border-top:2.2px solid #fdfdfa;"></div>
<div class="a" style="left:187.0px;top:178.5px;width:248.0px;height:156.5px;background:#000;"></div>
<svg class="a" style="left:0;top:0" width="624" height="451">
<polyline points="187.3,332.1 187.9,328.8 188.5,326.0 189.1,333.0 189.7,332.3 190.3,323.8 190.9,316.6 191.5,332.0 192.1,325.5 192.7,326.8 193.3,332.7 193.9,326.5 194.5,327.6 195.1,325.7 195.7,328.0 196.3,325.5 196.9,331.7 197.5,331.1 198.1,325.8 198.7,323.2 199.3,326.1 199.9,323.4 200.5,325.5 201.1,325.4 201.7,329.4 202.3,332.7 202.9,331.8 203.5,331.5 204.1,322.8 204.7,326.8 205.3,322.4 205.9,328.8 206.5,331.0 207.1,330.3 207.7,326.6 208.3,326.6 208.9,326.9 209.5,332.4 210.1,321.8 210.7,328.2 211.3,332.3 211.9,331.3 212.5,333.3 213.1,322.9 213.7,331.8 214.3,329.7 214.9,322.1 215.5,332.3 216.1,330.4 216.7,333.1 217.3,331.8 217.9,328.4 218.5,325.8 219.1,331.5 219.7,324.8 220.3,325.0 220.9,324.1 221.5,330.4 222.1,330.6 222.7,325.7 223.3,323.1 223.9,328.7 224.5,331.0 225.1,322.7 225.7,325.7 226.3,326.4 226.9,324.7 227.5,324.9 228.1,322.0 228.7,322.6 229.3,332.0 229.9,323.8 230.5,321.0 231.1,326.7 231.7,323.0 232.3,323.2 232.9,323.4 233.5,330.0 234.1,330.2 234.7,323.7 235.3,327.1 235.9,323.6 236.5,324.1 237.1,333.3 237.7,328.9 238.3,330.1 238.9,325.1 239.5,330.6 240.1,327.3 240.7,322.0 241.3,326.9 241.9,327.4 242.5,321.5 243.1,320.8 243.7,320.9 244.3,331.7 244.9,330.8 245.5,324.5 246.1,325.9 246.7,324.8 247.3,324.5 247.9,323.7 248.5,329.5 249.1,331.7 249.7,333.2 250.3,333.2 250.9,327.7 251.5,323.6 252.1,324.1 252.7,332.0 253.3,323.6 253.9,323.3 254.5,332.2 255.1,328.1 255.7,324.9 256.3,323.3 256.9,327.5 257.5,321.7 258.1,327.3 258.7,331.7 259.3,330.3 259.9,330.2 260.5,327.9 261.1,326.7 261.7,329.3 262.3,326.6 262.9,325.9 263.5,326.9 264.1,325.5 264.7,329.2 265.3,332.3 265.9,330.7 266.5,325.3 267.1,330.4 267.7,328.7 268.3,330.7 268.9,326.8 269.5,329.1 270.1,328.9 270.7,331.0 271.3,330.7 271.9,330.5 272.5,327.7 273.1,326.3 273.7,328.6 274.3,331.1 274.9,332.4 275.5,324.5 276.1,330.9 276.7,321.8 277.3,324.9 277.9,323.4 278.5,331.5 279.1,324.0 279.7,326.0 280.3,333.2 280.9,327.1 281.5,332.3 282.1,332.3 282.7,330.6 283.3,326.6 283.9,324.4 284.5,324.9 285.1,330.2 285.7,326.5 286.3,326.2 286.9,330.0 287.5,328.0 288.1,330.7 288.7,332.7 289.3,319.9 289.9,330.4 290.5,326.4 291.1,322.1 291.7,326.8 292.3,330.1 292.9,328.8 293.5,329.5 294.1,329.5 294.7,325.6 295.3,324.5 295.9,330.1 296.5,322.5 297.1,328.8 297.7,332.5 298.3,324.5 298.9,328.7 299.5,324.4 300.1,326.6 300.7,326.7 301.3,325.5 301.9,325.9 302.5,323.8 303.1,329.7 303.7,322.3 304.3,329.7 304.9,331.3 305.5,323.6 306.1,324.2 306.7,331.9 307.3,330.2 307.9,331.1 308.5,325.3 309.1,327.8 309.7,332.7 310.3,331.7 310.9,322.8 311.5,330.4 312.1,322.6 312.7,327.2 313.3,326.9 313.9,328.7 314.5,322.7 315.1,331.9 315.7,325.4 316.3,325.4 316.9,320.4 317.5,323.1 318.1,331.9 318.7,325.5 319.3,328.0 319.9,331.1 320.5,330.7 321.1,326.3 321.7,330.7 322.3,324.6 322.9,327.9 323.5,330.5 324.1,327.7 324.7,325.3 325.3,324.0 325.9,322.2 326.5,330.3 327.1,329.3 327.7,330.7 328.3,325.2 328.9,328.9 329.5,331.3 330.1,328.9 330.7,324.3 331.3,328.7 331.9,317.4 332.5,328.2 333.1,333.1 333.7,322.3 334.3,330.5 334.9,322.3 335.5,327.7 336.1,330.6 336.7,332.5 337.3,322.2 337.9,321.9 338.5,321.7 339.1,321.8 339.7,325.2 340.3,333.3 340.9,325.7 341.5,330.8 342.1,321.8 342.7,328.4 343.3,330.8 343.9,322.7 344.5,328.9 345.1,323.7 345.7,324.8 346.3,333.0 346.9,323.5 347.5,330.2 348.1,328.1 348.7,330.8 349.3,325.8 349.9,325.2 350.5,329.3 351.1,324.2 351.7,330.4 352.3,326.0 352.9,321.4 353.5,324.2 354.1,331.8 354.7,322.2 355.3,329.8 355.9,322.8 356.5,328.7 357.1,330.1 357.7,331.7 358.3,330.2 358.9,330.8 359.5,325.5 360.1,329.9 360.7,330.3 361.3,327.2 361.9,329.4 362.5,332.3 363.1,328.6 363.7,322.9 364.3,329.3 364.9,321.1 365.5,325.1 366.1,324.3 366.7,328.7 367.3,327.0 367.9,322.8 368.5,328.8 369.1,330.2 369.7,331.8 370.3,320.9 370.9,322.4 371.5,332.6 372.1,323.2 372.7,331.2 373.3,328.7 373.9,330.9 374.5,327.1 375.1,330.7 375.7,332.7 376.3,332.6 376.9,326.5 377.5,329.6 378.1,328.2 378.7,323.2 379.3,330.5 379.9,327.5 380.5,331.8 381.1,332.1 381.7,332.7 382.3,325.5 382.9,332.7 383.5,323.2 384.1,321.6 384.7,330.7 385.3,321.5 385.9,324.4 386.5,329.8 387.1,324.8 387.7,331.8 388.3,330.7 388.9,327.9 389.5,323.0 390.1,331.1 390.7,327.5 391.3,324.0 391.9,323.5 392.5,325.4 393.1,329.6 393.7,328.4 394.3,330.9 394.9,324.2 395.5,321.9 396.1,329.2 396.7,326.5 397.3,323.4 397.9,326.5 398.5,332.3 399.1,327.6 399.7,327.5 400.3,325.1 400.9,332.8 401.5,325.5 402.1,333.3 402.7,329.8 403.3,323.6 403.9,320.1 404.5,331.0 405.1,333.1 405.7,331.4 406.3,326.9 406.9,330.8 407.5,332.5 408.1,317.3 408.7,327.0 409.3,330.2 409.9,332.7 410.5,324.6 411.1,329.7 411.7,323.5 412.3,325.8 412.9,321.7 413.5,325.7 414.1,329.6 414.7,330.7 415.3,325.5 415.9,327.3 416.5,322.2 417.1,325.6 417.7,325.7 418.3,330.3 418.9,328.2 419.5,332.6 420.1,324.6 420.7,326.8 421.3,323.4 421.9,324.0 422.5,331.8 423.1,332.9 423.7,325.7 424.3,329.7 424.9,325.0 425.5,326.8 426.1,326.0 426.7,323.7 427.3,323.0 427.9,324.7 428.5,326.9 429.1,331.9 429.7,333.2 430.3,317.4 430.9,323.7 431.5,329.1 432.1,322.7 432.7,326.0 433.3,327.2 433.9,325.8 434.5,329.2" fill="none" stroke="#2ce038" stroke-width="1.0"/>
<path d="M195 335V223L196.1 218L197.3 223V335" fill="none" stroke="#24c834" stroke-width="0.85"/>
<path d="M312.7 178.5V335" stroke="#d41c2c" stroke-width="1"/><path d="M311.9 184.2h1.8v2.4h-1.8z" fill="#e02030"/>
<path d="M184.5 184.0h2.5" stroke="#222" stroke-width="0.6"/>
<text x="184" y="185.8" font-family="Liberation Mono, monospace" font-size="5.2" font-weight="bold" fill="#1c1c1c" text-anchor="end" textLength="10.4" lengthAdjust="spacingAndGlyphs">10dB</text>
<path d="M184.5 206.0h2.5" stroke="#222" stroke-width="0.6"/>
<text x="184" y="207.8" font-family="Liberation Mono, monospace" font-size="5.2" font-weight="bold" fill="#1c1c1c" text-anchor="end" textLength="13.0" lengthAdjust="spacingAndGlyphs">-10dB</text>
<path d="M184.5 217.6h2.5" stroke="#222" stroke-width="0.6"/>
<text x="184" y="219.4" font-family="Liberation Mono, monospace" font-size="5.2" font-weight="bold" fill="#1c1c1c" text-anchor="end" textLength="13.0" lengthAdjust="spacingAndGlyphs">-20dB</text>
<path d="M184.5 229.3h2.5" stroke="#222" stroke-width="0.6"/>
<text x="184" y="231.1" font-family="Liberation Mono, monospace" font-size="5.2" font-weight="bold" fill="#1c1c1c" text-anchor="end" textLength="13.0" lengthAdjust="spacingAndGlyphs">-30dB</text>
<path d="M184.5 240.9h2.5" stroke="#222" stroke-width="0.6"/>
<text x="184" y="242.7" font-family="Liberation Mono, monospace" font-size="5.2" font-weight="bold" fill="#1c1c1c" text-anchor="end" textLength="13.0" lengthAdjust="spacingAndGlyphs">-40dB</text>
<path d="M184.5 252.5h2.5" stroke="#222" stroke-width="0.6"/>
<text x="184" y="254.3" font-family="Liberation Mono, monospace" font-size="5.2" font-weight="bold" fill="#1c1c1c" text-anchor="end" textLength="13.0" lengthAdjust="spacingAndGlyphs">-50dB</text>
<path d="M184.5 264.2h2.5" stroke="#222" stroke-width="0.6"/>
<text x="184" y="266.0" font-family="Liberation Mono, monospace" font-size="5.2" font-weight="bold" fill="#1c1c1c" text-anchor="end" textLength="13.0" lengthAdjust="spacingAndGlyphs">-60dB</text>
<path d="M184.5 275.8h2.5" stroke="#222" stroke-width="0.6"/>
<text x="184" y="277.6" font-family="Liberation Mono, monospace" font-size="5.2" font-weight="bold" fill="#1c1c1c" text-anchor="end" textLength="13.0" lengthAdjust="spacingAndGlyphs">-70dB</text>
<path d="M184.5 287.5h2.5" stroke="#222" stroke-width="0.6"/>
<text x="184" y="289.3" font-family="Liberation Mono, monospace" font-size="5.2" font-weight="bold" fill="#1c1c1c" text-anchor="end" textLength="13.0" lengthAdjust="spacingAndGlyphs">-80dB</text>
<path d="M184.5 299.1h2.5" stroke="#222" stroke-width="0.6"/>
<text x="184" y="300.9" font-family="Liberation Mono, monospace" font-size="5.2" font-weight="bold" fill="#1c1c1c" text-anchor="end" textLength="13.0" lengthAdjust="spacingAndGlyphs">-90dB</text>
<path d="M184.5 310.7h2.5" stroke="#222" stroke-width="0.6"/>
<text x="184" y="312.5" font-family="Liberation Mono, monospace" font-size="5.2" font-weight="bold" fill="#1c1c1c" text-anchor="end" textLength="15.6" lengthAdjust="spacingAndGlyphs">-100dB</text>
<path d="M184.5 322.4h2.5" stroke="#222" stroke-width="0.6"/>
<text x="184" y="324.2" font-family="Liberation Mono, monospace" font-size="5.2" font-weight="bold" fill="#1c1c1c" text-anchor="end" textLength="15.6" lengthAdjust="spacingAndGlyphs">-110dB</text>
<path d="M184.5 334.0h2.5" stroke="#222" stroke-width="0.6"/>
<text x="184" y="335.8" font-family="Liberation Mono, monospace" font-size="5.2" font-weight="bold" fill="#1c1c1c" text-anchor="end" textLength="15.6" lengthAdjust="spacingAndGlyphs">-120dB</text>
<path d="M187.0 335v2" stroke="#222" stroke-width="0.6"/>
<text x="188.2" y="343.9" font-family="Liberation Mono, monospace" font-size="5.2" font-weight="bold" fill="#1c1c1c" text-anchor="middle" textLength="12.5" lengthAdjust="spacingAndGlyphs">0.0Hz</text>
<path d="M218.0 335v2" stroke="#222" stroke-width="0.6"/>
<text x="219.2" y="343.9" font-family="Liberation Mono, monospace" font-size="5.2" font-weight="bold" fill="#1c1c1c" text-anchor="middle" textLength="17.5" lengthAdjust="spacingAndGlyphs">31.25Hz</text>
<path d="M249.0 335v2" stroke="#222" stroke-width="0.6"/>
<text x="250.2" y="343.9" font-family="Liberation Mono, monospace" font-size="5.2" font-weight="bold" fill="#1c1c1c" text-anchor="middle" textLength="15.0" lengthAdjust="spacingAndGlyphs">62.5Hz</text>
<path d="M280.0 335v2" stroke="#222" stroke-width="0.6"/>
<text x="281.2" y="343.9" font-family="Liberation Mono, monospace" font-size="5.2" font-weight="bold" fill="#1c1c1c" text-anchor="middle" textLength="17.5" lengthAdjust="spacingAndGlyphs">93.75Hz</text>
<path d="M311.0 335v2" stroke="#222" stroke-width="0.6"/>
<text x="312.2" y="343.9" font-family="Liberation Mono, monospace" font-size="5.2" font-weight="bold" fill="#1c1c1c" text-anchor="middle" textLength="17.5" lengthAdjust="spacingAndGlyphs">125.0Hz</text>
<path d="M342.0 335v2" stroke="#222" stroke-width="0.6"/>
<text x="343.2" y="343.9" font-family="Liberation Mono, monospace" font-size="5.2" font-weight="bold" fill="#1c1c1c" text-anchor="middle" textLength="20.0" lengthAdjust="spacingAndGlyphs">156.25Hz</text>
<path d="M373.0 335v2" stroke="#222" stroke-width="0.6"/>
<text x="374.2" y="343.9" font-family="Liberation Mono, monospace" font-size="5.2" font-weight="bold" fill="#1c1c1c" text-anchor="middle" textLength="17.5" lengthAdjust="spacingAndGlyphs">187.5Hz</text>
<path d="M404.0 335v2" stroke="#222" stroke-width="0.6"/>
<text x="405.2" y="343.9" font-family="Liberation Mono, monospace" font-size="5.2" font-weight="bold" fill="#1c1c1c" text-anchor="middle" textLength="20.0" lengthAdjust="spacingAndGlyphs">218.75Hz</text>
<path d="M435.0 335v2" stroke="#222" stroke-width="0.6"/>
<text x="436.2" y="343.9" font-family="Liberation Mono, monospace" font-size="5.2" font-weight="bold" fill="#1c1c1c" text-anchor="middle" textLength="17.5" lengthAdjust="spacingAndGlyphs">250.0Hz</text>
</svg>
<div class="a" style="left:163.5px;top:349.8px;width:281px;height:1.3px;background:#6a685e;"></div>
<div class="a" style="left:163.5px;top:352.8px;width:281px;height:43.8px;border:1px solid #fdfcf6;background:#f2f0e6;"></div>
<div class="t mono" style="left:194.0px;top:360.5px;font-size:5.4px;font-weight:bold;color:#222;transform-origin:0 50%;transform:scaleX(0.75);">Select Channel</div>
<div class="t mono" style="left:241.0px;top:360.1px;font-size:5.4px;font-weight:bold;color:#222;transform-origin:0 50%;transform:scaleX(0.75);">Window function</div>
<div class="t mono" style="left:293.0px;top:360.1px;font-size:5.4px;font-weight:bold;color:#222;transform-origin:0 50%;transform:scaleX(0.78);">Main Frequency</div>
<div class="t mono" style="left:342.3px;top:372.8px;font-size:5.6px;font-weight:bold;color:#222;transform-origin:0 50%;transform:scaleX(0.86);">Cursor</div>
<svg class="a" style="left:194.8px;top:371.3px" width="4" height="9"><rect x="0.3" y="0.3" width="3" height="3.6" fill="#dce8d0" stroke="#98b080" stroke-width="0.4"/><rect x="0.3" y="4.4" width="3" height="3.6" fill="#dce8d0" stroke="#98b080" stroke-width="0.4"/></svg>
<div class="vb c" style="left:199.7px;top:370.8px;width:25.3px;height:9.1px;font-size:4.8px;font-weight:bold;"><span style="margin-top:0.7px">CH1</span></div>
<svg class="a" style="left:242.3px;top:371.8px" width="4" height="9"><rect x="0.3" y="0.3" width="3" height="3.6" fill="#dce8d0" stroke="#98b080" stroke-width="0.4"/><rect x="0.3" y="4.4" width="3" height="3.6" fill="#dce8d0" stroke="#98b080" stroke-width="0.4"/></svg>
<div class="vb c" style="left:247.0px;top:371.5px;width:27.3px;height:9.3px;font-size:4.8px;font-weight:bold;"><span style="margin-top:0.7px">HanMin</span></div>
<svg class="a" style="left:292.8px;top:371.8px" width="4" height="9"><rect x="0.3" y="0.3" width="3" height="3.6" fill="#dce8d0" stroke="#98b080" stroke-width="0.4"/><rect x="0.3" y="4.4" width="3" height="3.6" fill="#dce8d0" stroke="#98b080" stroke-width="0.4"/></svg>
<div class="vb c" style="left:297.6px;top:371.5px;width:27.0px;height:9.3px;font-size:4.8px;font-weight:bold;"><span style="margin-top:0.7px">0.00</span></div>
<div class="t mono" style="left:327.5px;top:374.6px;font-size:5.6px;font-weight:bold;color:#222;transform-origin:0 50%;transform:scaleX(0.82);">Hz</div>
<div class="vb c" style="left:364.5px;top:362.5px;width:31.5px;height:9.0px;font-size:4.8px;font-weight:bold;"><span style="margin-top:0.7px">0.00</span></div>
<div class="vb c" style="left:364.5px;top:376.0px;width:31.5px;height:9.4px;font-size:4.8px;font-weight:bold;"><span style="margin-top:0.7px">0.00</span></div>
<div class="t mono" style="left:398.2px;top:364.7px;font-size:5.2px;font-weight:bold;color:#222;transform-origin:0 50%;transform:scaleX(0.82);">dBV</div>
<div class="t mono" style="left:398.2px;top:378.6px;font-size:5.2px;font-weight:bold;color:#222;transform-origin:0 50%;transform:scaleX(0.82);">Hz</div>
<div class="a mono" style="left:423.3px;top:381px;width:20px;height:13.2px;background:#18a0a4;border:0.8px solid #0c5c60;color:#083038;font-size:4.8px;font-weight:bold;text-align:center;line-height:11.5px;">Quit</div>
</div></body></html>
